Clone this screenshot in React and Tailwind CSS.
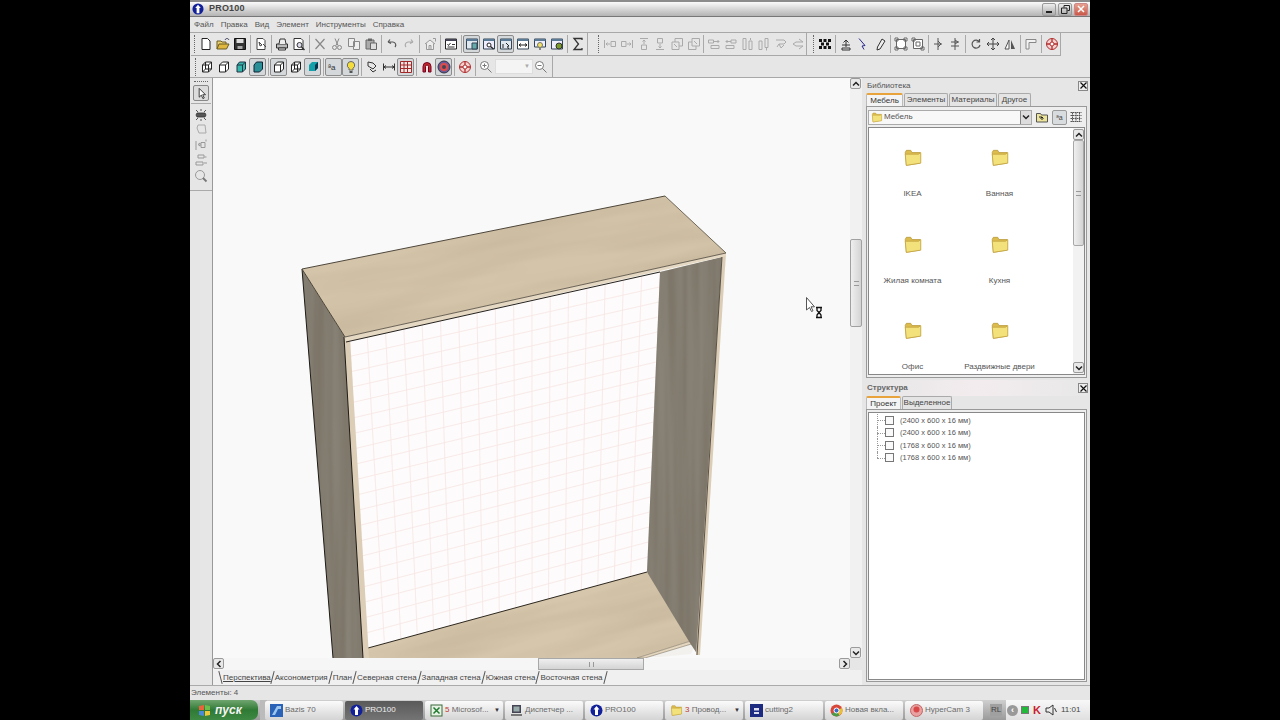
const font = { fontFamily: '"Liberation Sans", Arial, sans-serif' };

// toolbar icons, all drawn on a 14x14 box
const icons = {
  new: <path d="M3 1.5h5.5l2.5 2.5v8.5h-8z" fill="#fff" stroke="#222" />,
  open: (
    <>
      <path d="M1 12V4h4l1 1h4v2" fill="#e8cf70" stroke="#6b5a20" />
      <path d="M1 12l2-5h10l-2.5 5z" fill="#e0b840" stroke="#6b5a20" />
      <path d="M9 3c1-2 3-2 4 0" stroke="#335" />
    </>
  ),
  save: (
    <>
      <path d="M1.5 1.5h11v11h-11z" fill="#333" stroke="#111" />
      <path d="M3.5 2h7v4h-7z" fill="#ddd" />
      <path d="M4.5 9h5v3h-5z" fill="#aaa" />
    </>
  ),
  props: <path d="M3 1.5h6l2 2v9H3zM5 5l3 3-2 1zM9 7l3 3" fill="#fff" stroke="#444" />,
  print: (
    <>
      <path d="M1.5 7h11v4h-11z" fill="#bbb" stroke="#333" />
      <path d="M4 7l1-5h5l1 5M3.5 11h7v2h-7z" fill="#eee" stroke="#333" />
    </>
  ),
  preview: (
    <>
      <path d="M2 1.5h7l2 2v9H2z" fill="#fff" stroke="#333" />
      <circle cx="7.5" cy="8" r="2.5" fill="#dde" stroke="#333" />
      <path d="M9.5 10l3 3" stroke="#333" strokeWidth="1.5" />
    </>
  ),
  xcut: <path d="M2.5 2l9 10M11.5 2l-9 10" stroke="#888" strokeWidth="1.2" />,
  scissors: (
    <>
      <path d="M5 1.5l3 7M9 1.5l-3 7" stroke="#888" />
      <circle cx="4.5" cy="10.5" r="2" stroke="#888" />
      <circle cx="9.5" cy="10.5" r="2" stroke="#888" />
    </>
  ),
  copy: <path d="M1.5 1.5h6v8h-6zM6.5 4.5h6v8h-6z" fill="#eee" stroke="#888" />,
  paste: (
    <>
      <path d="M2 3h8v9H2z" fill="#aaa" stroke="#666" />
      <path d="M4 1.5h4V4H4z" fill="#666" />
      <path d="M6.5 6h6v6.5h-6z" fill="#ddd" stroke="#666" />
    </>
  ),
  undo: <path d="M3 5l2-2.5M3 5l3 1.5M3 5h5a3 3 0 0 1 2 5" stroke="#555" strokeWidth="1.2" />,
  redo: <path d="M11 5L9 2.5M11 5L8 6.5M11 5H6a3 3 0 0 0-2 5" stroke="#aaa" strokeWidth="1.2" />,
  house: <path d="M2 7l5-4 5 4M3.5 6.500v6h7v-6M6 12.500v-4h2v4M10 1.500h2.500v3" fill="#eee" stroke="#999" />,
  check: (
    <>
      <path d="M1.500 2h11v10h-11z" fill="#fff" stroke="#222" />
      <path d="M1.500 2h11v2h-11z" fill="#445" />
      <path d="M3.500 7l1 1.500 2-2.500M8 7.500h3M3.500 10h7" stroke="#333" />
    </>
  ),
  view1: (
    <>
      <path d="M1.500 2h11v10h-11z" fill="#dfe8ee" stroke="#345" />
      <path d="M1.500 2h11v2h-11z" fill="#5a7a96" />
      <path d="M7 6h5v6H7z" fill="#6aa" stroke="#345" />
    </>
  ),
  view2: (
    <>
      <path d="M1.500 2h11v10h-11z" fill="#eef" stroke="#345" />
      <path d="M1.500 2h11v2h-11z" fill="#5a7a96" />
      <circle cx="7" cy="8" r="2" fill="#fff" stroke="#222" />
      <path d="M8.500 9.500l3 2.500" stroke="#222" strokeWidth="1.300" />
    </>
  ),
  view3: (
    <>
      <path d="M1.500 2h11v10h-11z" fill="#dfe8ee" stroke="#345" />
      <path d="M1.500 2h11v2h-11z" fill="#5a7a96" />
      <path d="M7 6l3 3-1.500.5 1 2.500M4 7v4" stroke="#222" />
    </>
  ),
  view4: (
    <>
      <path d="M1.500 2h11v10h-11z" fill="#fff" stroke="#345" />
      <path d="M1.500 2h11v2h-11z" fill="#5a7a96" />
      <path d="M3 8h8M3 8l2-1.500M3 8l2 1.500M11 8L9 6.500M11 8L9 9.500" stroke="#222" />
    </>
  ),
  view5: (
    <>
      <path d="M1.500 2h11v8h-11z" fill="#eef" stroke="#345" />
      <path d="M1.500 2h11v2h-11z" fill="#5a7a96" />
      <circle cx="7" cy="8" r="2.500" fill="#f2e26a" stroke="#776" />
      <path d="M6 11h2v2H6z" fill="#888" />
    </>
  ),
  view6: (
    <>
      <path d="M1.500 2h11v10h-11z" fill="#eef" stroke="#345" />
      <path d="M1.500 2h11v2h-11z" fill="#5a7a96" />
      <circle cx="9" cy="9" r="3" fill="#7a9a2a" stroke="#333" />
    </>
  ),
  sigma: <path d="M11 3V1.500H3L7.500 7 3 12.500h8V11" stroke="#333" strokeWidth="1.300" />,
  box: <path d="M2.500 5l3-3h6v7l-3 3h-6zM2.500 5h6v7M8.500 5l3-3" fill="#fff" stroke="#222" />,
  boxx: <path d="M2.500 5l3-3h6v7l-3 3h-6zM2.500 5h6v7M8.500 5l3-3M5.500 2v7h6M2.500 12l3-3" fill="#fff" stroke="#222" />,
  boxt: <path d="M3 5l2.500-3h6v7l-3 3H3zM3 5h5.500v7M8.500 5l3-3" fill="#35b8ac" stroke="#234" />,
  boxs: <path d="M3 5l2.500-3h6v7l-3 3H3z" fill="#2a8f96" stroke="#123" />,
  boxd: (
    <>
      <path d="M3 5l3-3h6v6l-3 3H3z" fill="#13a0a8" />
      <path d="M9 5l3-3v6l-3 3z" fill="#05344a" />
    </>
  ),
  text: <text x="1" y="10" fontSize="8" fill="#333" stroke="none">ªa</text>,
  bulb: (
    <>
      <path d="M7 1.500a3.700 3.700 0 0 1 2 6.800V10H5V8.300a3.700 3.700 0 0 1 2-6.800z" fill="#f3dc3c" stroke="#666" />
      <path d="M5.500 11h3v2h-3z" fill="#555" />
    </>
  ),
  tag: <path d="M3 2l5 1 3 3-3 3-5-3zM5 9l3 3 3-2" stroke="#333" />,
  dim: <path d="M1.500 3.500v7M12.500 3.500v7M2 7h10M2 7l2-1.500M2 7l2 1.500M12 7l-2-1.500M12 7l-2 1.500" stroke="#333" />,
  grid: <path d="M1.500 1.500h11v11h-11zM5 1.500v11M8.500 1.500v11M1.500 5h11M1.500 8.500h11" fill="#f6e8e4" stroke="#a02828" />,
  magnet: <path d="M3 12V6.500a4 4 0 0 1 8 0V12H8.500V6.500a1.500 1.500 0 0 0-3 0V12z" fill="#c42a2a" stroke="#702" />,
  target: (
    <>
      <circle cx="7" cy="7" r="6" fill="#6a5a9a" stroke="#334" />
      <circle cx="7" cy="7" r="4" fill="#e04a4a" />
      <circle cx="7" cy="7" r="2" fill="#445" />
    </>
  ),
  life: (
    <>
      <circle cx="7" cy="7" r="5.500" fill="#f6cfcf" stroke="#b03030" />
      <circle cx="7" cy="7" r="2" fill="#fff" stroke="#b03030" />
      <path d="M7 1.500v3.500M7 9v3.500M1.500 7H5M9 7h3.500" stroke="#b03030" strokeWidth="1.300" />
    </>
  ),
  zoomin: (
    <>
      <circle cx="5.500" cy="5.500" r="4" fill="#fff" stroke="#777" />
      <path d="M3.500 5.500h4M5.500 3.500v4M8.500 8.500l4 4" stroke="#777" />
    </>
  ),
  zoomout: (
    <>
      <circle cx="5.500" cy="5.500" r="4" fill="#fff" stroke="#777" />
      <path d="M3.500 5.500h4M8.500 8.500l4 4" stroke="#777" />
    </>
  ),
  a1: <path d="M1.500 3v8M3 7h4M3 7l1.500-1.500M3 7l1.500 1.500M8 4.500h4.500v5H8z" stroke="#aaa" />,
  a2: <path d="M12.500 3v8M11 7H7M11 7L9.500 5.500M11 7L9.500 8.500M1.500 4.500H6v5H1.500z" stroke="#aaa" />,
  a3: <path d="M3 1.500h8M7 3v4M5.500 4.500L7 3l1.500 1.500M4.500 8h5v4.500h-5z" stroke="#aaa" />,
  a4: <path d="M3 12.500h8M7 11V7M5.500 9.500L7 11l1.500-1.500M4.500 1.500h5V6h-5z" stroke="#aaa" />,
  a5: <path d="M2 5h7v7.500H2zM5 5V1.500h7.500V9H9M4 7l3 3" stroke="#aaa" />,
  a6: <path d="M5 1.500h7.500V9H5zM1.500 5H5M1.500 5v7.500H9V9M7 4l3 3" stroke="#aaa" />,
  a7: <path d="M1.500 3h5v3h-5zM4 8.500h8v3H4zM7 4.500h5M10.500 3l1.500 1.500-1.500 1.500" stroke="#aaa" />,
  a8: <path d="M7 3h5v3H7zM2 8.500h8v3H2zM7 4.500H2M3.500 3L2 4.500 3.500 6" stroke="#aaa" />,
  a9: <path d="M2 1.500h3v11H2zM8 4h3v8.500H8zM9.500 1v2" stroke="#aaa" />,
  a10: <path d="M2 4h3v8.500H2zM8 1.500h3v9H8zM9.500 11v2.500" stroke="#aaa" />,
  a11: <path d="M2 3h8l2 2-2 2H5l-2 3M5 7l2 4 3-3" stroke="#aaa" />,
  a12: <path d="M12 5H5L2 7l3 2h7M8 2l4 3M8 12l4-3" stroke="#aaa" />,
  dots: <path d="M1 2h3v3H1zM5.500 2h3v3h-3zM10 2h3v3h-3zM3 5.500h3v3H3zM8 5.500h3v3H8zM1 9h3v3H1zM5.500 9h3v3h-3zM10 9h3v3h-3z" fill="#111" />,
  lift: <path d="M3 11h8v2H3zM7 10V3M4.500 5.500L7 3l2.500 2.500M3 8h8" stroke="#333" />,
  cursorb: <path d="M3 1.500l6 7-3 .5 2 3.500" fill="#dde" stroke="#2a2a8a" />,
  pen: <path d="M9 2l3 2-5 8-3 1 .5-3z" fill="#eee" stroke="#333" />,
  frame: <path d="M2.500 2.500h9v9h-9zM1 1h3v3H1zM10 1h3v3h-3zM1 10h3v3H1zM10 10h3v3h-3z" fill="#fff" stroke="#666" />,
  frame2: <path d="M2.500 2.500h9v9h-9zM5 5h4v4H5zM1 1h3v3H1zM10 10h3v3h-3z" fill="#fff" stroke="#666" />,
  axis1: <path d="M7 1v12M3 7h8M7 4l3 3-3 3" stroke="#555" />,
  axis2: <path d="M7 1v12M3 5h8M3 9h8M7 3l3 2-3 2" stroke="#555" />,
  rotate: <path d="M10.500 5a4 4 0 1 0 .5 3M10.500 2v3h-3" stroke="#555" strokeWidth="1.200" />,
  move: <path d="M7 1v12M1 7h12M7 1L5 3M7 1l2 2M7 13l-2-2M7 13l2-2M1 7l2-2M1 7l2 2M13 7l-2-2M13 7l-2 2" stroke="#444" />,
  mirror: (
    <>
      <path d="M6 3v9H2z" fill="#fff" stroke="#555" />
      <path d="M8 3v9h4z" fill="#555" />
    </>
  ),
  flat: <path d="M2 2.500h10v3H5V12H2z" fill="#f2f2f2" stroke="#888" />,
  arrow: <path d="M4.500 1.500v9.500l2.300-2.200 1.700 3.700 1.500-.7-1.700-3.500h3z" fill="#fff" stroke="#333" />,
  lamp: <path d="M3 6h8l1 2-1 2H3L2 8zM2 3l2 2M12 3l-2 2M2 13l2-2M12 13l-2-2M7 2v2M7 12v2" fill="#555" stroke="#333" strokeWidth="0.800" />,
  sq: <path d="M4 3h7l1 8H5L3 6z" stroke="#aaa" />,
  alignl: <path d="M2 3v9M4 6.500l2-1.500v3zM7 4.500h4v5H7zM12 1.500v2" stroke="#999" />,
  alignv: <path d="M4 2h6v3H4zM2 9h7v3H2zM10 10l3 0M10.500 4l2 0" stroke="#999" />,
  zoomtool: (
    <>
      <circle cx="6" cy="6" r="4.500" stroke="#999" />
      <path d="M9 9l3.500 3.500" stroke="#777" strokeWidth="1.800" />
    </>
  ),
};

function Icon({ name, size = 14 }) {
  return (
    <svg width={size} height={size} viewBox="0 0 14 14" fill="none" strokeWidth="1">
      {icons[name]}
    </svg>
  );
}

// a "!name" entry is a pressed button
function Tools({ items }) {
  return items.map((it, i) => {
    if (it === "|") return <span key={i} className="w-[4px] h-[18px] flex justify-center"><span className="w-px h-full bg-[#a9a9a9]" /></span>;
    const pressed = it[0] === "!";
    return (
      <span
        key={i}
        className={`w-[17px] h-[18px] flex items-center justify-center rounded-[2px] ${pressed ? "bg-[#d4d8da] border border-[#8c8c8c]" : ""}`}
      >
        <Icon name={pressed ? it.slice(1) : it} />
      </span>
    );
  });
}

const Grip = () => <span className="w-[3px] h-[18px] border-l border-dotted border-[#666] ml-[2px]" />;

const row1a = ["new", "open", "save", "|", "props", "|", "print", "preview", "|", "xcut", "scissors", "copy", "paste", "|", "undo", "redo", "|", "house", "|", "check", "|", "!view1", "view2", "!view3", "view4", "view5", "view6", "|", "sigma"];
const row1b = ["a1", "a2", "a3", "a4", "a5", "a6", "|", "a7", "a8", "a9", "a10", "a11", "a12"];
const row1c = ["dots", "|", "lift", "cursorb", "pen", "|", "frame", "frame2", "|", "axis1", "axis2", "|", "rotate", "move", "mirror", "|", "flat", "|", "life"];
const row2a = ["boxx", "box", "boxt", "!boxs", "|", "!box", "boxx", "!boxd", "|", "!text", "!bulb", "|", "tag", "dim", "!grid", "|", "magnet", "!target", "|", "life", "|", "zoomin"];

const menu = ["Файл", "Правка", "Вид", "Элемент", "Инструменты", "Справка"];
const views = ["Аксонометрия", "План", "Северная стена", "Западная стена", "Южная стена", "Восточная стена"];
const folders = ["IKEA", "Ванная", "Жилая комната", "Кухня", "Офис", "Раздвижные двери"];
const parts = ["(2400 x 600 x 16 мм)", "(2400 x 600 x 16 мм)", "(1768 x 600 x 16 мм)", "(1768 x 600 x 16 мм)"];

const lerp = (a, b, t) => [a[0] + (b[0] - a[0]) * t, a[1] + (b[1] - a[1]) * t];
const wall = { tl: [349, 341], tr: [660, 272], bl: [368, 648], br: [647, 572] };

function Cabinet() {
  const cols = Array.from({ length: 16 }, (_, i) => (i + 1) / 17);
  const rows = Array.from({ length: 19 }, (_, i) => (i + 1) / 20);
  return (
    <svg className="w-full h-full block" viewBox="213 78 637 580">
      <defs>
        <filter id="wood" x="0" y="0" width="100%" height="100%">
          <feTurbulence type="fractalNoise" baseFrequency="0.005 0.045" numOctaves="3" seed="7" />
          <feColorMatrix values="0 0 0 0 0.58  0 0 0 0 0.48  0 0 0 0 0.34  1.7 0 0 0 -0.55" />
        </filter>
        <filter id="dark" x="0" y="0" width="100%" height="100%">
          <feTurbulence type="fractalNoise" baseFrequency="0.12 0.004" numOctaves="2" seed="3" />
          <feColorMatrix values="0 0 0 0 0.36  0 0 0 0 0.33  0 0 0 0 0.29  0.6 0 0 0 -0.12" />
        </filter>
        <clipPath id="topPanel"><polygon points="302,269 665,196 726,253 345,337" /></clipPath>
        <clipPath id="bottomPanel"><polygon points="368,648 647,572 697,639 637,658 368,658" /></clipPath>
        <clipPath id="sideL"><polygon points="302,269 345,337 364,658 333,658" /></clipPath>
        <clipPath id="sideR"><polygon points="660,272 722,257 698,655 690,643 647,572" /></clipPath>
      </defs>

      {/* back wall with the tile grid */}
      <polygon points="349,341 660,272 647,572 368,648" fill="#fdfbfb" />
      {cols.map((t) => {
        const a = lerp(wall.tl, wall.tr, t);
        const b = lerp(wall.bl, wall.br, t);
        return <line key={t} x1={a[0]} y1={a[1]} x2={b[0]} y2={b[1]} stroke="#f6e6e3" strokeWidth="0.8" />;
      })}
      {rows.map((t) => {
        const a = lerp(wall.tl, wall.bl, t);
        const b = lerp(wall.tr, wall.br, t);
        return <line key={t} x1={a[0]} y1={a[1]} x2={b[0]} y2={b[1]} stroke="#f6e6e3" strokeWidth="0.8" />;
      })}

      {/* bottom shelf */}
      <polygon points="368,648 647,572 697,639 637,658 368,658" fill="#d6c6ab" />
      <g clipPath="url(#bottomPanel)">
        <rect x="340" y="520" width="400" height="180" filter="url(#wood)" transform="rotate(-14 500 600)" />
      </g>
      <line x1="368" y1="648" x2="647" y2="572" stroke="#2c2820" strokeWidth="1" />
      <polygon points="646,657 697,641 691,654 660,657" fill="#f2f1ee" />
      <polygon points="637,658 697,639 698,642 645,658" fill="#e4d6bf" stroke="#6f6657" strokeWidth="0.5" />

      {/* side panels */}
      <polygon points="302,269 345,337 364,658 333,658" fill="#7b7467" />
      <g clipPath="url(#sideL)">
        <rect x="295" y="265" width="80" height="395" filter="url(#dark)" />
      </g>
      <polygon points="660,272 722,257 698,655 690,643 647,572" fill="#7b7467" />
      <g clipPath="url(#sideR)">
        <rect x="645" y="255" width="80" height="402" filter="url(#dark)" />
      </g>
      <polygon points="344,337 350,337 369,658 363,658" fill="#dccdb6" />
      <line x1="344" y1="337" x2="363" y2="658" stroke="#1f1c18" strokeWidth="1" />
      <polygon points="722,256 726,253 700,655 696,655" fill="#dccdb6" />
      <line x1="722" y1="257" x2="697" y2="655" stroke="#3b362e" strokeWidth="0.8" />
      <line x1="302" y1="269" x2="333" y2="658" stroke="#1f1c18" strokeWidth="1" />

      {/* top panel */}
      <polygon points="302,269 665,196 726,253 345,337" fill="#d4c4aa" />
      <g clipPath="url(#topPanel)">
        <rect x="290" y="160" width="450" height="190" filter="url(#wood)" transform="rotate(-11 510 260)" />
      </g>
      <polygon points="345,337 726,253 726,256 346,342" fill="#e6d9c4" />
      <line x1="346" y1="342" x2="660" y2="272" stroke="#24211c" strokeWidth="1" />
      <line x1="345" y1="337" x2="726" y2="253" stroke="#4a4438" strokeWidth="0.8" />
      <line x1="302" y1="269" x2="665" y2="196" stroke="#4d473b" strokeWidth="1" />
      <line x1="665" y1="196" x2="726" y2="253" stroke="#6f6859" strokeWidth="1" />
      <line x1="302" y1="269" x2="345" y2="337" stroke="#4d473b" strokeWidth="1" />
    </svg>
  );
}

const Chev = ({ d }) => (
  <svg width="8" height="8" viewBox="0 0 8 8" fill="none" stroke="#222" strokeWidth="1.500">
    <path d={d} />
  </svg>
);

const UP = "M1 5.500L4 2.500l3 3";
const DOWN = "M1 2.500L4 5.500l3-3";
const LEFT = "M5.500 1L2.500 4l3 3";
const RIGHT = "M2.500 1L5.500 4l-3 3";

const SbBtn = ({ d }) => (
  <span className="w-[11px] h-[11px] shrink-0 flex items-center justify-center bg-[#e8e8e8] border border-[#9a9a9a] rounded-[2px]">
    <Chev d={d} />
  </span>
);

function Folder({ size = 20 }) {
  return (
    <svg width={size} height={size} viewBox="0 0 18 18">
      <path d="M2 5l1-2h4l1 2h7.500v9.500L3 16.500z" fill="#dcbc4c" stroke="#b8983a" strokeWidth="0.700" />
      <path d="M2 6.500h12l2-1.500v9.500L3 16.500z" fill="#f3e27c" stroke="#c4a440" strokeWidth="0.700" />
    </svg>
  );
}

const CloseX = () => (
  <span className="w-[10px] h-[10px] flex items-center justify-center border border-[#888] bg-[#eee]">
    <svg width="7" height="7" viewBox="0 0 7 7" stroke="#111" strokeWidth="1.200"><path d="M0.500 0.500l6 6M6.500 0.500l-6 6" /></svg>
  </span>
);

function PanelTab({ label, active, w }) {
  return (
    <span
      className={`h-full flex items-center justify-center rounded-t-[2px] border border-b-0 text-[8px] ${w} ${
        active ? "bg-[#f4f4f4] border-[#bbb] border-t-2 border-t-[#e8a33c] text-[#333]" : "bg-[#e4e4e4] border-[#aaa] text-[#444]"
      }`}
    >
      {label}
    </span>
  );
}

function Task({ label, active, arrow, icon, num }) {
  return (
    <div
      className={`w-[78px] h-[19px] shrink-0 flex items-center gap-[2px] pl-[5px] pr-[3px] rounded-[2px] text-[8px] ${
        active ? "bg-gradient-to-b from-[#5a5a5a] to-[#747474] text-[#f0f0f0]" : "bg-gradient-to-b from-[#fbfbfb] to-[#d4d4d4] text-[#6a6a6a]"
      }`}
    >
      <span className="w-[13px] h-[13px] shrink-0 flex items-center justify-center">{icon}</span>
      <span className="flex-1 whitespace-nowrap">
        {num && <span className="text-[#c0392b]">{num} </span>}
        {label}
      </span>
      {arrow && <span className="text-[6px] text-[#333]">▼</span>}
    </div>
  );
}

const ProIcon = ({ size = 13 }) => (
  <svg width={size} height={size} viewBox="0 0 13 13">
    <circle cx="6.500" cy="6.500" r="6" fill="#12209a" />
    <path d="M6.500 2l3 3.500H8V11H5V5.500H3.500z" fill="#fff" />
  </svg>
);

const taskIcons = {
  bazis: (
    <svg width="13" height="13" viewBox="0 0 13 13"><rect width="13" height="13" fill="#2a62b8" /><path d="M2 11l5-9h4v3H8l-3 6z" fill="#9cc6ee" /></svg>
  ),
  excel: (
    <svg width="13" height="13" viewBox="0 0 13 13"><rect x="1" y="1" width="11" height="11" fill="#e8f2e4" stroke="#3a6a3a" /><path d="M3.500 3.500l6 6M9.500 3.500l-6 6" stroke="#1f7a30" strokeWidth="1.500" /></svg>
  ),
  monitor: (
    <svg width="13" height="13" viewBox="0 0 13 13"><rect x="2" y="1" width="9" height="8" fill="#445" /><rect x="3.500" y="2.500" width="6" height="5" fill="#9aa" /><rect x="1" y="10" width="11" height="2" fill="#777" /></svg>
  ),
  folder: <Folder size={14} />,
  cutting: (
    <svg width="13" height="13" viewBox="0 0 13 13"><rect width="13" height="13" fill="#1c2a80" /><path d="M4 4h5v2.500H4zM4 8h5v2H4z" fill="#dde" /></svg>
  ),
  chrome: (
    <svg width="13" height="13" viewBox="0 0 13 13"><circle cx="6.500" cy="6.500" r="6" fill="#d8483a" /><path d="M6.500 6.500L1.500 10a6 6 0 0 0 8 1.500z" fill="#4a9a48" /><path d="M6.500 6.500l3 5A6 6 0 0 0 12 4z" fill="#e8c13a" /><circle cx="6.500" cy="6.500" r="2.500" fill="#3a6ac8" stroke="#fff" /></svg>
  ),
  hyper: (
    <svg width="13" height="13" viewBox="0 0 13 13"><circle cx="6.500" cy="6.500" r="6" fill="#e8a0a0" stroke="#c06868" /><circle cx="6.500" cy="5.500" r="3" fill="#d84848" /></svg>
  ),
};

export default function App() {
  return (
    <div className="w-screen h-screen bg-black flex justify-center overflow-hidden" style={font}>
      <div className="w-[900px] h-[720px] flex flex-col bg-[#e6e6e6] text-[#444]">
        {/* title bar */}
        <div className="h-[17px] shrink-0 flex items-center pl-[2px] pr-[2px] border-t-2 border-t-[#8c8c8c] border-b border-b-[#777] bg-gradient-to-b from-[#fbfbfb] to-[#b4b4b4]">
          <ProIcon size={12} />
          <span className="ml-[5px] text-[9px] font-bold text-[#444] tracking-[0.2px]">PRO100</span>
          <div className="ml-auto flex gap-[2px]">
            <span className="w-[14px] h-[13px] rounded-[2px] border border-[#999] bg-gradient-to-b from-[#eee] to-[#aaa] flex items-end justify-center pb-[2px]">
              <span className="w-[6px] h-[2px] bg-[#222]" />
            </span>
            <span className="w-[14px] h-[13px] rounded-[2px] border border-[#999] bg-gradient-to-b from-[#eee] to-[#aaa] flex items-center justify-center">
              <svg width="9" height="9" viewBox="0 0 9 9" fill="none" stroke="#222"><path d="M3 2.500V.5h5.500v5H6.500M.5 3h5.500v5.500H.5z" /></svg>
            </span>
            <span className="w-[14px] h-[13px] rounded-[2px] border border-[#c88] bg-gradient-to-b from-[#e8a090] to-[#c85848] flex items-center justify-center">
              <svg width="8" height="8" viewBox="0 0 8 8" stroke="#fff" strokeWidth="1.500"><path d="M1 1l6 6M7 1L1 7" /></svg>
            </span>
          </div>
        </div>

        {/* menu */}
        <div className="h-[15px] shrink-0 flex items-center pl-[4px] gap-[7px] text-[8px] text-[#555]">
          {menu.map((m) => (
            <span key={m}>{m}</span>
          ))}
        </div>

        {/* toolbars */}
        <div className="h-[24px] shrink-0 flex items-center border-t border-t-[#a8a8a8] pl-[1px]">
          <div className="flex items-center h-[23px] w-[397px] border-b border-r border-[#a8a8a8] pl-[1px]">
            <Grip />
            <Tools items={row1a} />
          </div>
          <div className="flex items-center h-[23px] w-[218px] border-b border-[#a8a8a8] pl-[8px]">
            <Grip />
            <span className="w-[1px]" />
            <Tools items={row1b} />
          </div>
          <div className="flex items-center h-[23px] w-[255px] border-b border-r border-[#a8a8a8]">
            <span className="w-px h-[23px] bg-[#a8a8a8] mr-[4px]" />
            <Grip />
            <span className="w-[1px]" />
            <Tools items={row1c} />
          </div>
        </div>
        <div className="h-[22px] shrink-0 flex items-center border-b border-b-[#a8a8a8] pl-[2px]">
          <div className="flex items-center h-[21px] w-[361px] border-r border-[#a8a8a8] pl-[1px]">
            <Grip />
            <Tools items={row2a} />
            <span className="w-[38px] h-[15px] bg-[#f4f4f4] border border-[#ddd] flex items-center justify-end pr-[2px] mx-[1px]">
              <span className="text-[6px] text-[#aaa]">▼</span>
            </span>
            <span className="w-[14px] flex justify-center"><Icon name="zoomout" /></span>
          </div>
        </div>

        {/* work area */}
        <div className="h-[607px] shrink-0 flex">
          <div className="w-[23px] shrink-0 flex flex-col items-center border-r border-r-[#999]">
            <span className="w-[14px] mt-[3px] border-t border-dotted border-[#666]" />
            <span className="mt-[3px] w-[16px] h-[16px] flex items-center justify-center rounded-[2px] bg-[#dcdcdc] border border-[#888]">
              <Icon name="arrow" size={13} />
            </span>
            <span className="w-[20px] mt-[2px] border-t border-[#aaa]" />
            <div className="flex flex-col items-center mt-[2px]">
              {["lamp", "sq", "alignl", "alignv", "zoomtool"].map((n) => (
                <span key={n} className="h-[15.500px] flex items-center"><Icon name={n} /></span>
              ))}
            </div>
            <span className="w-full mt-[6px] border-t border-[#aaa]" />
          </div>

          <div className="w-[649px] shrink-0 flex flex-col">
            <div className="h-[580px] flex">
              <div className="w-[637px] bg-[#f9f9f9] overflow-hidden relative">
                <Cabinet />
                {/* busy cursor */}
                <svg className="absolute left-[592px] top-[218px]" width="20" height="24" viewBox="0 0 20 24">
                  <path d="M1.500 1.500v12.500l3-2.500 2 4 1.500-.7-2-4h3.500z" fill="#fff" stroke="#555" />
                  <path d="M11 11.500h6M11 21.500h6M12 12v2.500l2 2-2 2.500v2.500M16 12v2.500l-2 2 2 2.500v2.500" fill="none" stroke="#111" strokeWidth="1.300" />
                </svg>
              </div>
              <div className="w-[12px] flex flex-col bg-[#f1f1f1]">
                <SbBtn d={UP} />
                <div className="h-[150px]" />
                <div className="h-[88px] bg-gradient-to-r from-[#efefef] to-[#d4d4d4] border border-[#a0a0a0] rounded-[2px] flex items-center justify-center">
                  <span className="w-[5px] h-[5px] border-y border-[#999]" />
                </div>
                <div className="flex-1" />
                <SbBtn d={DOWN} />
              </div>
            </div>
            <div className="h-[12px] flex">
              <div className="w-[637px] flex bg-[#f6f6f6]">
                <SbBtn d={LEFT} />
                <div className="w-[314px]" />
                <div className="w-[106px] bg-gradient-to-b from-[#efefef] to-[#d4d4d4] border border-[#a8a8a8] flex items-center justify-center">
                  <span className="w-[5px] h-[5px] border-x border-[#999]" />
                </div>
                <div className="flex-1" />
                <SbBtn d={RIGHT} />
              </div>
            </div>
            <div className="h-[15px] flex items-center pl-[7px] text-[8px] text-[#444] bg-[#f0f0f0]">
              <span className="w-px h-[13px] bg-[#555] -rotate-[15deg]" />
              <span className="ml-[2px] underline underline-offset-1">Перспектива</span>
              <span className="w-px h-[13px] bg-[#555] rotate-[15deg] ml-[1px]" />
              {views.map((v) => (
                <span key={v} className="flex items-center">
                  <span className="mx-[2px]">{v}</span>
                  <span className="w-px h-[13px] bg-[#555] rotate-[15deg]" />
                </span>
              ))}
            </div>
          </div>

          {/* right docks */}
          <div className="w-[228px] shrink-0 pl-[4px] pr-[3px] flex flex-col">
            <div className="h-[15px] flex items-center text-[8px] text-[#555] pl-[1px]">
              <span>Библиотека</span>
              <span className="ml-auto mr-[-1px]"><CloseX /></span>
            </div>
            <div className="h-[13px] flex gap-[1px]">
              <PanelTab label="Мебель" active w="w-[37px]" />
              <PanelTab label="Элементы" w="w-[44px]" />
              <PanelTab label="Материалы" w="w-[48px]" />
              <PanelTab label="Другое" w="w-[33px]" />
            </div>
            <div className="h-[272px] border border-[#999] bg-[#eeeeee] px-[1px] pt-[1px] flex flex-col">
              <div className="h-[18px] flex items-center">
                <div className="w-[164px] h-[15px] bg-[#f8f8f8] border border-[#aaa] flex items-center pl-[2px] text-[8px] text-[#555]">
                  <Folder size={12} />
                  <span className="ml-[1px]">Мебель</span>
                  <span className="ml-auto w-[11px] h-[13px] flex items-center justify-center bg-[#ddd] border-l border-[#888]">
                    <Chev d={DOWN} />
                  </span>
                </div>
                <svg className="ml-[3px]" width="14" height="14" viewBox="0 0 14 14">
                  <path d="M1.500 3.500h4l1 1.500h6v7h-11z" fill="#ece49a" stroke="#555" />
                  <path d="M7 7v3M5.500 8.500L7 7l1.500 1.500M7 7H4" fill="none" stroke="#222" />
                </svg>
                <span className="ml-[3px] w-[15px] h-[15px] bg-[#d8dcde] border border-[#999] rounded-[2px] text-[7px] flex items-center justify-center leading-none">ªa</span>
                <svg className="ml-[2px]" width="14" height="14" viewBox="0 0 14 14" fill="none" stroke="#555">
                  <path d="M1.500 2.500h11M1.500 5.500h11M1.500 8.500h11M1.500 11.500h11M3.500 2.500v9M7 2.500v9M10.500 2.500v9" strokeDasharray="1.500 0.500" />
                </svg>
              </div>
              <div className="mt-[1px] h-[248px] w-[217px] border border-[#888] bg-white flex overflow-hidden">
                <div className="grid grid-cols-[87px_87px] auto-rows-[86.500px] content-start text-[8px] text-[#555] w-[204px] pt-[1px]">
                  {folders.map((f) => (
                    <div key={f} className="flex flex-col items-center pt-[18px]">
                      <Folder />
                      <span className="mt-[21px] leading-[12px] whitespace-nowrap">{f}</span>
                    </div>
                  ))}
                </div>
                <div className="w-[11px] flex flex-col py-[1px] bg-[#f2f2f2]">
                  <SbBtn d={UP} />
                  <div className="h-[106px] bg-gradient-to-r from-[#efefef] to-[#d4d4d4] border border-[#a8a8a8] rounded-[2px] flex items-center justify-center">
                    <span className="w-[5px] h-[5px] border-y border-[#999]" />
                  </div>
                  <div className="flex-1" />
                  <SbBtn d={DOWN} />
                </div>
              </div>
            </div>

            <div className="h-[2px]" />
            <div className="h-[16px] flex items-center text-[8px] font-bold text-[#666] bg-gradient-to-r from-[#e6e6e6] via-[#f3ecee] to-[#e8e8e8] pl-[1px]">
              <span>Структура</span>
              <span className="ml-auto mr-[-1px]"><CloseX /></span>
            </div>
            <div className="h-[13px] flex gap-[1px]">
              <PanelTab label="Проект" active w="w-[35px]" />
              <PanelTab label="Выделенное" w="w-[50px]" />
            </div>
            <div className="h-[273px] border border-[#999] bg-[#eeeeee] p-[1px] pt-[2px]">
              <div className="h-full border border-[#888] bg-white pt-[1px] text-[7.500px] text-[#555]">
                {parts.map((p, i) => (
                  <div key={i} className="h-[12.500px] flex items-center pl-[8px]">
                    <span className="relative w-[8px] h-full shrink-0">
                      <span className={`absolute left-0 top-0 border-l border-dotted border-[#999] ${i === parts.length - 1 ? "h-1/2" : "h-full"}`} />
                      <span className="absolute left-0 top-1/2 w-full border-t border-dotted border-[#999]" />
                    </span>
                    <span className="w-[9px] h-[9px] shrink-0 border border-[#777] bg-[#fafafa]" />
                    <span className="ml-[6px]">{p}</span>
                  </div>
                ))}
              </div>
            </div>
          </div>
        </div>

        {/* status */}
        <div className="h-[15px] shrink-0 flex items-center pl-[1px] text-[8px] text-[#555] border-t border-t-[#aaa]">
          Элементы: 4
        </div>

        {/* xp taskbar */}
        <div className="h-[20px] shrink-0 flex items-center bg-gradient-to-b from-[#cfcfcf] to-[#9a9a9a]">
          <div className="w-[68px] h-full flex items-center pl-[8px] gap-[4px] rounded-r-[7px] bg-gradient-to-b from-[#6fa56f] via-[#2f7a35] to-[#3e8a44]">
            <svg width="13" height="13" viewBox="0 0 13 13">
              <path d="M1 2l5-1v5H1z" fill="#e8643c" />
              <path d="M7 1l5 1v4H7z" fill="#6cc04a" />
              <path d="M1 7h5v5l-5-1z" fill="#4a8ad8" />
              <path d="M7 7h5v4l-5 1z" fill="#f0c83c" />
            </svg>
            <span className="text-[12px] font-bold italic text-[#f4f4f4]">пуск</span>
          </div>
          <div className="w-[7px] ml-[2px] h-full bg-[#bbb]" />
          <div className="flex gap-[2px] ml-[-2px]">
            <Task label="Bazis 70" icon={taskIcons.bazis} />
            <Task label="PRO100" active icon={<ProIcon />} />
            <Task label="Microsof..." num="5" arrow icon={taskIcons.excel} />
            <Task label="Диспетчер ..." icon={taskIcons.monitor} />
            <Task label="PRO100" icon={<ProIcon />} />
            <Task label="Провод..." num="3" arrow icon={taskIcons.folder} />
            <Task label="cutting2" icon={taskIcons.cutting} />
            <Task label="Новая вкла..." icon={taskIcons.chrome} />
            <Task label="HyperCam 3" icon={taskIcons.hyper} />
          </div>
          <span className="ml-[7px] text-[8px] text-[#444] bg-[#a0a0a0] px-[1px]">RL</span>
          <div className="ml-auto w-[84px] h-full flex items-center pl-[1px] bg-gradient-to-b from-[#f8f8f8] to-[#e0e0e0]">
            <span className="w-[11px] h-[11px] rounded-full bg-[#999] text-white text-[9px] leading-[10px] text-center font-bold">‹</span>
            <span className="ml-[3px] w-[8px] h-[8px] bg-[#22b83a] border border-[#777]" />
            <span className="ml-[4px] text-[11px] font-bold text-[#c81e2a] leading-none">K</span>
            <svg className="ml-[4px]" width="12" height="12" viewBox="0 0 12 12" fill="none" stroke="#333"><path d="M1 4h3l4-3v10L4 8H1zM9.500 4l2 4" /></svg>
            <span className="ml-[4px] text-[8px] text-[#444]">11:01</span>
          </div>
        </div>
      </div>
    </div>
  );
}
